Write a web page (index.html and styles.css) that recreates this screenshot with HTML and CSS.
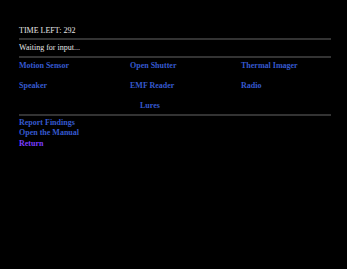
FILE: index.html
```html
<!DOCTYPE html>
<html>

<head>
    <title>Investigation</title>
    <meta charset="utf-8">
    <link rel="stylesheet" href="styles.css">
</head>

<body>
    <div id="jogo">
        <div class="timer">TIME LEFT: 292</div>
        <hr class="linha">
        <div class="status">Waiting for input...</div>
        <hr class="linha">
        <div class="ferramentas">
            <a href="#">Motion Sensor</a>
            <a href="#">Open Shutter</a>
            <a href="#">Thermal Imager</a>
            <a href="#">Speaker</a>
            <a href="#">EMF Reader</a>
            <a href="#">Radio</a>
        </div>
        <div class="lures"><a href="#">Lures</a></div>
        <hr class="linha">
        <div class="menu">
            <a href="#">Report Findings</a>
            <a href="#">Open the Manual</a>
            <a href="#" class="visitado">Return</a>
        </div>
    </div>
</body>

</html>
```

FILE: styles.css
```css
body {
    margin: 0;
    background-color: #000;
    color: #e6e6e6;
    font-family: "Liberation Serif", serif;
    font-size: 8px;
    line-height: 10px;
}

#jogo {
    width: 312px;
    padding: 26px 19px 0 19px;
}

.linha {
    border: none;
    border-top: 2px solid #333;
    margin: 0;
}

.timer {
    height: 12px;
}

.status {
    padding: 3px 0 3px 0;
}

a {
    color: #3559cf;
    font-weight: bold;
    text-decoration: none;
}

.visitado {
    color: #7b3cff;
    margin-top: 1px;
}

.ferramentas {
    display: grid;
    grid-template-columns: 111px 111px 90px;
    row-gap: 10px;
    padding-top: 3px;
}

.lures {
    padding: 10px 0 3px 121px;
}

.menu {
    display: flex;
    flex-direction: column;
    padding-top: 2px;
}
```
